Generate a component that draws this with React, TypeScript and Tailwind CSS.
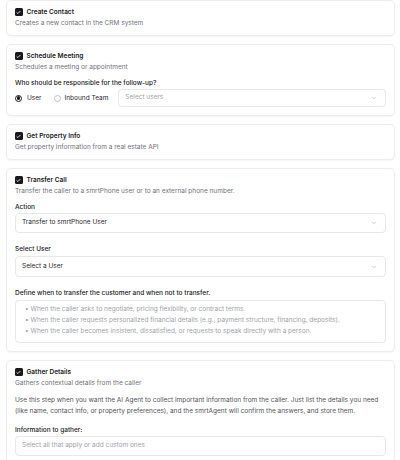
import { ChevronDown, Check } from 'lucide-react';

const font = { fontFamily: 'Inter, "Noto Sans", sans-serif' };

function Box() {
    return (
        <span className="flex h-[7.5px] w-[7.5px] shrink-0 items-center justify-center rounded-[1.5px] bg-[#18181b]">
            <Check className="h-[5px] w-[5px] text-white" strokeWidth={4} />
        </span>
    );
}

function Card({ title, sub, children }: { title: string; sub: string; children?: React.ReactNode }) {
    return (
        <div className="rounded-[5px] border border-[#ececef] bg-white px-[8px] pb-[8px] pt-[7px] shadow-[0_1px_2px_rgba(0,0,0,0.04)]">
            <div className="flex h-[8px] items-center gap-[4px]">
                <Box />
                <span className="text-[6.5px] font-semibold leading-[8px] text-[#18181b]">{title}</span>
            </div>
            <p className="mt-[3px] text-[6.5px] leading-[8px] text-[#71717a]">{sub}</p>
            {children}
        </div>
    );
}

function Select({ value, placeholder, h = 'h-[20px]' }: { value?: string; placeholder?: string; h?: string }) {
    return (
        <div className={`flex ${h} items-center justify-between rounded-[4px] border border-[#e8e8eb] bg-white pl-[6px] pr-[8px]`}>
            <span className={`text-[6.5px] ${value ? 'text-[#27272a]' : 'text-[#a1a1aa]'}`}>{value ?? placeholder}</span>
            <ChevronDown className="h-[6px] w-[6px] text-[#a1a1aa]" strokeWidth={2} />
        </div>
    );
}

function Label({ children, className = '' }: { children: React.ReactNode; className?: string }) {
    return <p className={`text-[6.5px] font-medium leading-[8px] text-[#18181b] ${className}`}>{children}</p>;
}

export default function App() {
    return (
        <div style={font} className="flex h-[460px] w-[400px] flex-col gap-[8px] overflow-hidden bg-white px-[6px] pr-[5px]">
            <Card title="Create Contact" sub="Creates a new contact in the CRM system" />

            <Card title="Schedule Meeting" sub="Schedules a meeting or appointment">
                <Label className="mt-[8px]">Who should be responsible for the follow-up?</Label>
                <div className="mt-[2px] flex items-center">
                    <span className="flex h-[7px] w-[7px] items-center justify-center rounded-full border border-[#18181b]">
                        <span className="h-[3.5px] w-[3.5px] rounded-full bg-[#18181b]" />
                    </span>
                    <span className="ml-[5px] text-[6.5px] leading-[8px] text-[#27272a]">User</span>
                    <span className="ml-[12px] h-[7px] w-[7px] rounded-full border border-[#c4c4c8]" />
                    <span className="ml-[4px] text-[6.5px] leading-[8px] text-[#27272a]">Inbound Team</span>
                    <div className="ml-[10px] flex-1">
                        <Select placeholder="Select users" h="h-[18px]" />
                    </div>
                </div>
            </Card>

            <Card title="Get Property Info" sub="Get property information from a real estate API" />

            <Card title="Transfer Call" sub="Transfer the caller to a smrtPhone user or to an external phone number.">
                <Label className="mt-[8px]">Action</Label>
                <div className="mt-[2px]">
                    <Select value="Transfer to smrtPhone User" />
                </div>
                <Label className="mt-[12px]">Select User</Label>
                <div className="mt-[3px]">
                    <Select value="Select a User" h="h-[21px]" />
                </div>
                <Label className="mt-[12px]">Define when to transfer the customer and when not to transfer.</Label>
                <div className="mt-[3px] h-[43px] rounded-[4px] border border-[#e8e8eb] px-[9px] pt-[3px] text-[6.5px] leading-[11px] text-[#a1a1aa]">
                    <p>• When the caller asks to negotiate, pricing flexibility, or contract terms.</p>
                    <p>• When the caller requests personalized financial details (e.g., payment structure, financing, deposits).</p>
                    <p>• When the caller becomes insistent, dissatisfied, or requests to speak directly with a person.</p>
                </div>
            </Card>

            <Card title="Gather Details" sub="Gathers contextual details from the caller">
                <p className="mt-[8px] text-[6.5px] leading-[11px] text-[#52525b]">
                    Use this step when you want the AI Agent to collect important information from the caller. Just list the details you need (like name, contact info, or property preferences), and the smrtAgent will confirm the answers, and store them.
                </p>
                <Label className="mt-[9px]">Information to gather:</Label>
                <div className="mt-[2px] flex h-[20px] items-center rounded-[4px] border border-[#e8e8eb] pl-[6px]">
                    <span className="text-[6.5px] text-[#a1a1aa]">Select all that apply or add custom ones</span>
                </div>
            </Card>
        </div>
    );
}
